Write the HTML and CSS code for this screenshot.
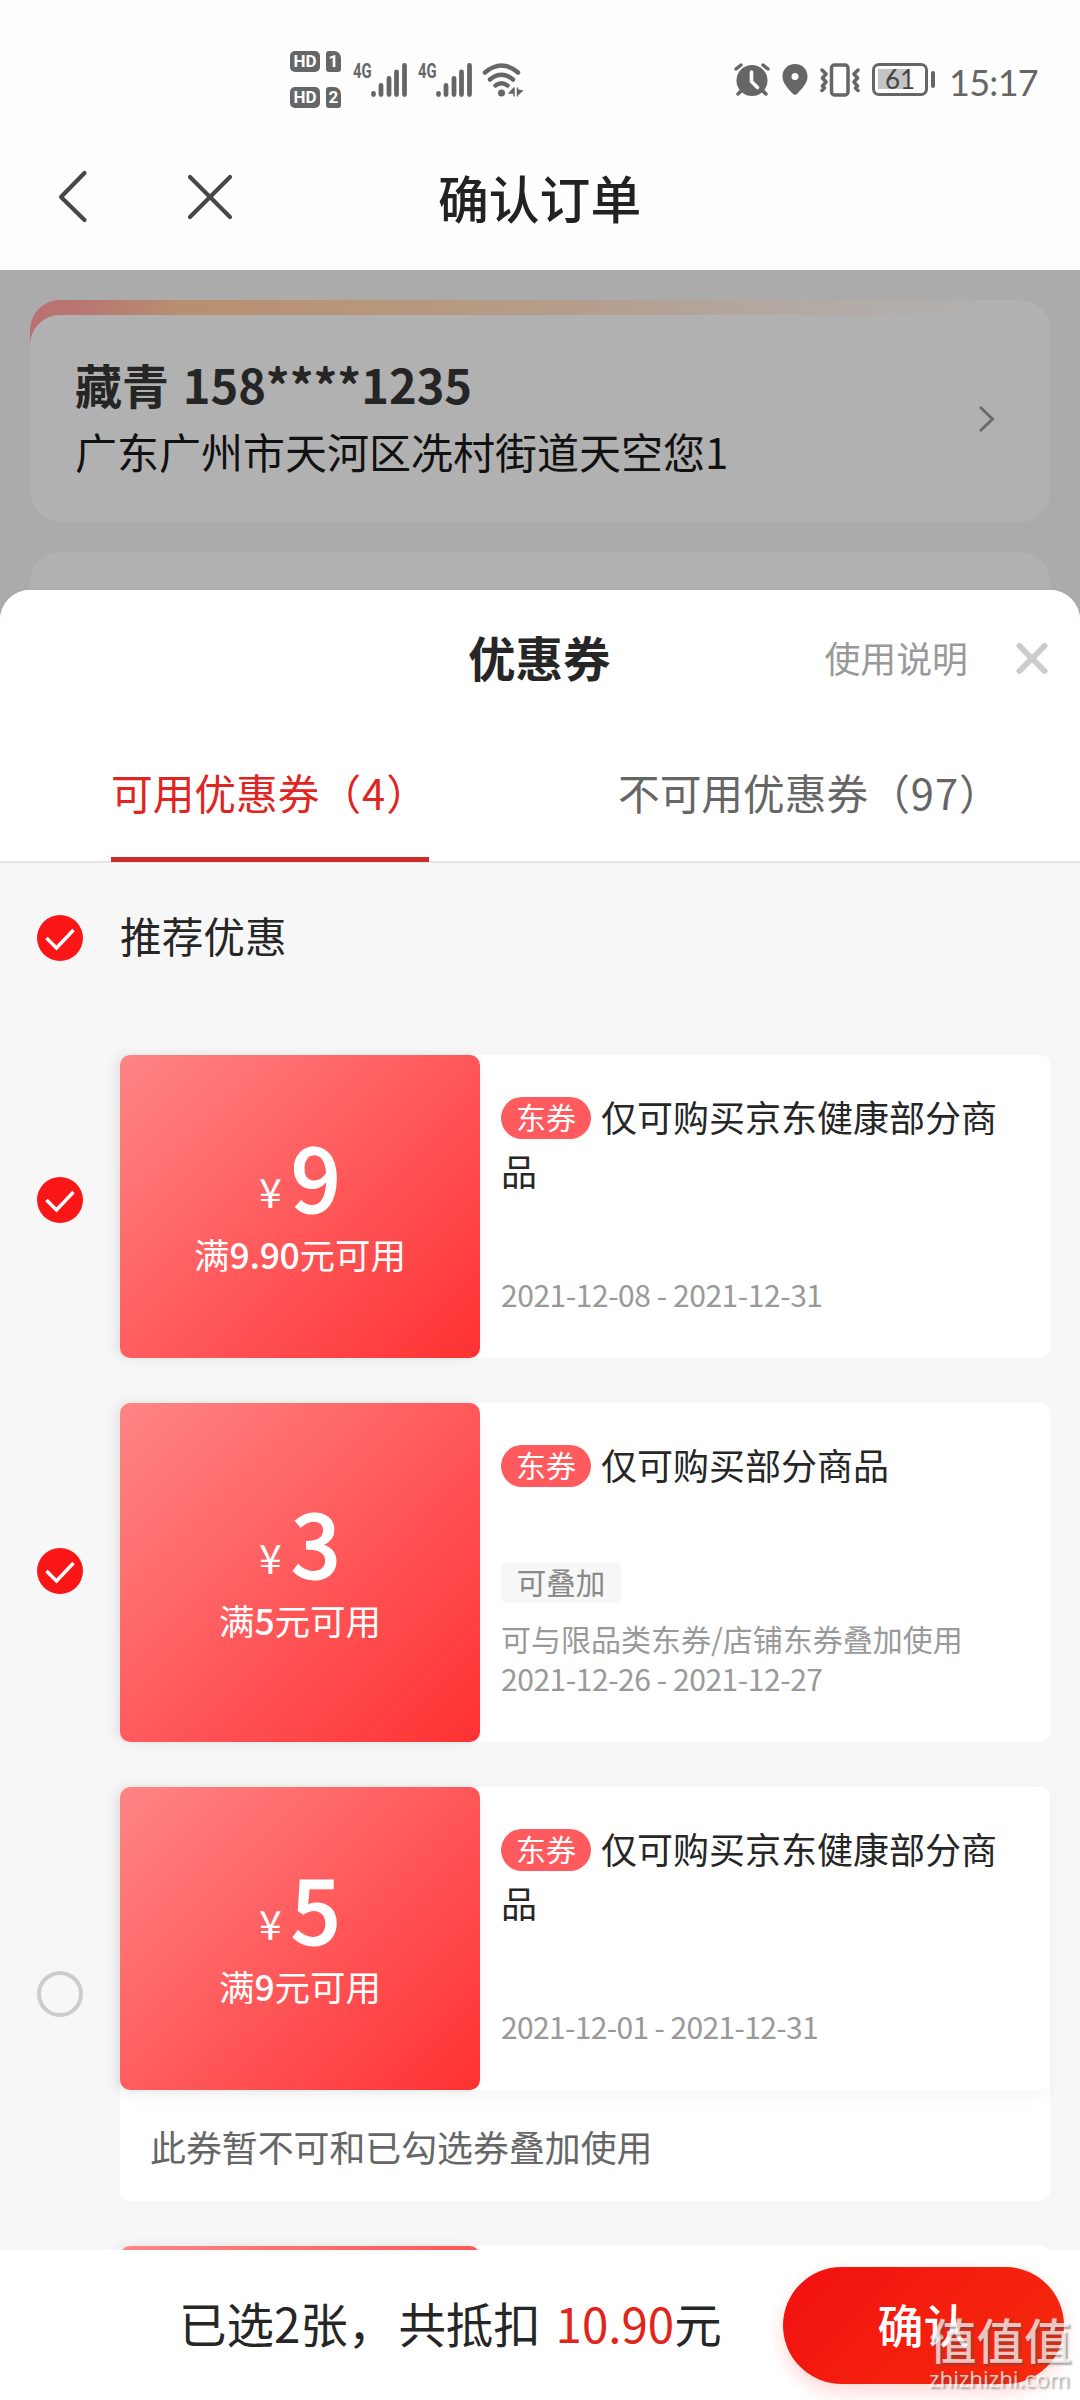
FILE: index.html
```html
<!DOCTYPE html>
<html lang="zh-CN">
<head>
<meta charset="utf-8">
<title>确认订单</title>
<link rel="stylesheet" href="styles.css">
</head>
<body>
<svg class="defs" width="0" height="0">
  <defs>
    <symbol id="signal" viewBox="0 0 36 34">
      <path d="M2.5 30.5v1M10 22.500v9M18 15.500v16M25.500 9v22.500M33.500 2.500v29" stroke="#666" stroke-width="4.800" stroke-linecap="round"/>
    </symbol>
    <symbol id="check" viewBox="0 0 46 46">
      <circle cx="23" cy="23" r="23" fill="#fa1617"/>
      <path d="M9.500 23l10 10 17-18" fill="none" stroke="#fff" stroke-width="3.400"/>
    </symbol>
  </defs>
</svg>
<div class="screen">
  <header class="top">
    <div class="status">
      <div class="hd-stack">
        <div class="hd-row"><span class="hd">HD</span><span class="sim">1</span></div>
        <div class="hd-row"><span class="hd">HD</span><span class="sim">2</span></div>
      </div>
      <span class="net">4G</span><svg class="signal" width="36" height="34"><use href="#signal"/></svg>
      <span class="net net-b">4G</span><svg class="signal" width="36" height="34"><use href="#signal"/></svg>
      <svg class="wifi" width="42" height="34" viewBox="0 0 42 34" fill="none" stroke="#666" stroke-width="4.500" stroke-linecap="round">
        <path d="M3 9.500Q19.500 -4.500 36 9.500M8 16.500Q19.500 7 31 16.500M13.500 22.500Q19.500 18 25.500 22.500"/>
        <circle cx="19.500" cy="30" r="3.500" fill="#666" stroke="none"/>
        <path d="M32 25v8M32 25l-4.500 5H32M35.500 25v8M35.500 27l4.500 1-4.500 4" fill="#666" stroke="#666" stroke-width="1.500"/>
      </svg>
      <span class="grow"></span>
      <svg width="36" height="34" viewBox="0 0 36 34">
        <path d="M8 27l-4 4M28 27l4 4M2 6l5-4M29 2l5 4" stroke="#666" stroke-width="3.500" stroke-linecap="round"/>
        <circle cx="18" cy="17.500" r="15.500" fill="#666"/>
        <path d="M17.500 9v9.500l6 6" fill="none" stroke="#fff" stroke-width="3.600" stroke-linecap="round" stroke-linejoin="round"/>
      </svg>
      <svg class="pin" width="26" height="34" viewBox="0 0 26 34"><path fill="#666" fill-rule="evenodd" d="M13 1C5.500 1 .5 6.500.5 13.500.5 20 6 25.500 10.500 30.500q2.500 2.500 5 0C20 25.500 25.500 20 25.500 13.500 25.500 6.500 20.500 1 13 1zm0 9a3.500 3.500 0 1 1 0 7 3.500 3.500 0 0 1 0-7z"/></svg>
      <svg class="vibe" width="40" height="34" viewBox="0 0 40 34" fill="none" stroke="#666" stroke-width="3.500" stroke-linecap="round" stroke-linejoin="round">
        <rect x="11.500" y="2" width="16.500" height="30" rx="3"/>
        <path d="M2 7l4 4-3.500 4 3.500 4-3.500 4 2 2-2.500 2.500M38 7l-4 4 3.500 4-3.500 4 3.500 4-2 2 2.500 2.500"/>
      </svg>
      <span class="battery"><span class="level"></span><span class="pct">61</span></span><span class="cap"></span>
      <span class="time">15:17</span>
    </div>
    <div class="nav">
      <svg width="200" height="54" viewBox="0 0 200 54" fill="none" stroke="#46474b" stroke-width="4.200" stroke-linecap="round" stroke-linejoin="round"><path d="M26.500 3L3 27l23.500 23M132 7l40 40M172 7l-40 40"/></svg>
      <h1>确认订单</h1>
    </div>
  </header>

  <section class="page">
    <div class="address">
      <div class="address-in">
        <div>
          <div class="who">藏青 <span>158****1235</span></div>
          <div class="where">广东广州市天河区冼村街道天空您1</div>
        </div>
        <svg width="18" height="28" viewBox="0 0 18 28" fill="none" stroke="#6b6b6b" stroke-width="3"><path d="M2 2l12.500 12L2 26"/></svg>
      </div>
    </div>
    <div class="next-card"></div>
  </section>

  <section class="sheet">
    <div class="sheet-head">
      <h2>优惠券</h2>
      <span class="help">使用说明</span>
      <svg width="34" height="34" viewBox="0 0 34 34" stroke="#ccc" stroke-width="6" stroke-linecap="round"><path d="M4.500 5l25 25M29.500 5l-25 25"/></svg>
    </div>
    <nav class="tabs">
      <div class="tab on">可用优惠券<span class="count">（4）</span></div>
      <div class="tab">不可用优惠券<span class="count">（97）</span></div>
    </nav>
    <div class="list">
      <div class="recommend"><svg width="46" height="46"><use href="#check"/></svg><span>推荐优惠</span></div>

      <article class="row first">
        <svg class="pick" width="46" height="46"><use href="#check"/></svg>
        <div class="coupon">
          <div class="main">
            <div class="value"><div class="amount"><i>¥</i><b>9</b></div><div class="rule">满<em>9.90</em>元可用</div></div>
            <div class="info"><p class="name"><span class="tag">东券</span>仅可购买京东健康部分商品</p><p class="date">2021-12-08 - 2021-12-31</p></div>
          </div>
        </div>
      </article>

      <article class="row second">
        <svg class="pick" width="46" height="46"><use href="#check"/></svg>
        <div class="coupon">
          <div class="main tall">
            <div class="value"><div class="amount"><i>¥</i><b>3</b></div><div class="rule">满<em>5</em>元可用</div></div>
            <div class="info"><p class="name"><span class="tag">东券</span>仅可购买部分商品</p>
              <div><span class="stack">可叠加</span><p class="note">可与限品类东券/店铺东券叠加使用</p><p class="date">2021-12-26 - 2021-12-27</p></div></div>
          </div>
        </div>
      </article>

      <article class="row">
        <span class="pick empty"></span>
        <div class="coupon">
          <div class="main lifted">
            <div class="value"><div class="amount"><i>¥</i><b>5</b></div><div class="rule">满<em>9</em>元可用</div></div>
            <div class="info"><p class="name"><span class="tag">东券</span>仅可购买京东健康部分商品</p><p class="date date-ones">2021-12-01 - 2021-12-31</p></div>
          </div>
          <p class="warn">此券暂不可和已勾选券叠加使用</p>
        </div>
      </article>

      <article class="row">
        <span class="pick"></span>
        <div class="coupon"><div class="main"><div class="value"></div></div></div>
      </article>
    </div>
  </section>

  <footer class="bar">
    <p class="sum">已选2张，<span class="off">共抵扣</span> <span class="total">10.90</span>元</p>
    <div class="confirm">确认</div>
  </footer>
  <div class="mark"><span class="mark-zh">值值值</span><span class="mark-en">zhizhizhi.com</span></div>
</div>
</body>
</html>
```
FILE: styles.css
```css
* { box-sizing: border-box; }
body, h1, h2, p { margin: 0; }
body { font-family: "Noto Sans CJK SC", sans-serif; background: #fff; color: #262626; }
i, em { font-style: normal; }
svg { flex: none; display: block; }
.defs { position: absolute; }
.screen { position: relative; width: 1080px; height: 2400px; overflow: hidden; display: flex; flex-direction: column; background: #ababab; }

.top { height: 270px; flex: none; background: #fefefe; }
.status { height: 130px; padding: 29px 44px 0 290px; display: flex; align-items: center; color: #666; }
.hd-stack { display: flex; flex-direction: column; gap: 15px; width: 63px; }
.hd-row { display: flex; gap: 6px; height: 21px; }
.hd, .sim { background: #666; color: #fff; border-radius: 5px; font: 700 17px/21px Roboto, sans-serif; text-align: center; }
.hd { width: 30px; }
.sim { width: 15px; border-radius: 3px 7px 3px 3px; }
.net { width: 18px; height: 34px; font: 700 20px/16px "Roboto", sans-serif; transform: scaleX(.74); transform-origin: 0 0; white-space: nowrap; }
.net-b { margin-left: 11px; }
.wifi { margin-left: 10px; }
.grow { flex: 1; }
.pin { margin-left: 12px; }
.vibe { margin-left: 12px; }
.battery { position: relative; width: 56px; height: 33px; margin-left: 12px; border: 3.500px solid #666; border-radius: 7px; }
.level { position: absolute; left: 3px; top: 3px; width: 29px; height: 20px; background: #c4c4c4; }
.pct { position: absolute; inset: 0; font: 400 26px/27px Lato, sans-serif; text-align: center; color: #444; }
.cap { width: 4px; height: 17px; margin-left: 3px; border-radius: 2px; background: #666; }
.time { margin-left: 14px; width: 87px; padding-top: 4px; font: 400 36px/40px Lato, sans-serif; letter-spacing: -.7px; white-space: nowrap; }
.nav { display: flex; align-items: center; height: 134px; padding-left: 58px; }
h1 { margin: -1px 0 0 180px; font-weight: 500; font-size: 50.800px; line-height: 70px; color: #222; }

.page { flex: none; height: 320px; padding: 30px 30px 0; }
.address { height: 222px; border-radius: 30px; padding-top: 15px; background: linear-gradient(90deg, #b97070 0, #b87671 50px, #b88f70 150px, #b89679 340px, #b59d89 520px, #b3a69e 700px, #b1b1b1 950px); }
.address-in { height: 207px; padding: 0 54px 0 45px; border-radius: 30px; background: #b1b1b1; display: flex; align-items: center; justify-content: space-between; }
.who { font-weight: 700; font-size: 47px; line-height: 68px; margin-top: -4px; color: #252525; }
.who span { margin-left: 3px; }
.where { font-size: 42px; line-height: 65px; color: #111; }
.next-card { height: 60px; margin-top: 30px; border-radius: 30px 30px 0 0; background: #b1b1b1; }

.sheet { flex: none; height: 1660px; display: flex; flex-direction: column; background: #f7f7f7; border-radius: 30px 30px 0 0; overflow: hidden; }
.sheet-head { flex: none; height: 136px; background: #fff; display: flex; align-items: center; padding: 0 31px 0 468px; }
h2 { margin-top: -2px; font-size: 47.500px; line-height: 64px; font-weight: 700; flex: 1; }
.help { margin-top: -3px; font-size: 35.900px; color: #999; }
.sheet-head svg { margin-left: 47px; }
.tabs { flex: none; height: 137px; background: #fff; border-bottom: 2px solid #e5e5e5; display: flex; }
.tab { height: 136px; margin-left: 111px; width: 318px; font-size: 41.700px; line-height: 133px; color: #666; white-space: nowrap; }
.tab + .tab { margin-left: 189px; width: 400px; }
.count { letter-spacing: 1px; }
.on { color: #e02422; border-bottom: 5px solid #cd2a2a; }
.list { flex: 1; min-height: 0; overflow: hidden; padding: 52px 30px 0 37px; display: flex; flex-direction: column; }
.recommend { flex: none; display: flex; align-items: center; height: 46px; margin-bottom: 94px; font-size: 41.700px; line-height: 46px; gap: 37px; }
.recommend span { margin-top: -7px; }
.row { flex: none; display: flex; align-items: center; gap: 37px; margin-bottom: 45px; }
.pick { flex: none; width: 46px; height: 46px; }
.first .pick { margin-top: -14px; }
.second .pick { margin-top: -3px; }
.empty { border: 4px solid #ccc; border-radius: 50%; }
.coupon { width: 930px; background: #fff; border-radius: 10px; }
.main { height: 303px; display: flex; border-radius: 10px; background: #fff; }
.tall { height: 339px; }
.lifted { box-shadow: 0 8px 18px rgba(0,0,0,.035); }
.value { width: 360px; border-radius: 10px; background: linear-gradient(135deg, #ff8585 0, #ff5a5c 50%, #fe3132 100%); color: #fff; display: flex; flex-direction: column; align-items: center; justify-content: center; box-shadow: -4px 0 12px rgba(0,0,0,.09); }
.amount { height: 88px; line-height: 88px; display: flex; align-items: baseline; margin-top: -2px; }
.amount i { font-size: 41px; margin-right: 9px; padding-bottom: 5px; transform: translateY(-5px); }
.amount b { font-size: 88px; font-weight: 500; -webkit-text-stroke: 1px #fff; }
.rule { font-size: 35.500px; line-height: 52px; margin-top: 9px; }
.rule em { font-weight: 500; letter-spacing: -.3px; }
.info { flex: 1; display: flex; flex-direction: column; justify-content: space-between; padding: 34px 38px 44px 21px; }
.name { font-size: 36px; line-height: 54px; color: #262626; }
.tag { display: inline-block; width: 90px; height: 42px; margin-right: 10px; border-radius: 21px; background: #ff5a5e; color: #fff; font-size: 30px; line-height: 39px; text-align: center; vertical-align: 3px; }
.date, .note { font-size: 30px; line-height: 40px; color: #999; white-space: nowrap; }
.date { letter-spacing: -.45px; }
.date-ones { letter-spacing: -.65px; }
.stack { display: block; width: 120px; height: 41px; margin-bottom: 15px; border-radius: 5px; background: #f7f7f7; font-size: 29.500px; line-height: 38px; color: #888; text-align: center; }
.warn { height: 111px; padding-left: 30px; font-size: 35.900px; line-height: 112px; color: #666; }

.bar { flex: none; height: 150px; background: #fff; display: flex; align-items: center; justify-content: space-between; padding: 0 16px 0 179px; }
.sum { margin-top: -5px; font-size: 47.500px; line-height: 66px; white-space: nowrap; }
.off { margin: 0 4px 0 3px; }
.total { color: #e1251b; }
.confirm { width: 281px; height: 117px; border-radius: 59px; background: linear-gradient(135deg, #f21010, #f62c0c); box-shadow: 0 8px 18px rgba(250,40,20,.18); color: #fff; font-weight: 500; font-size: 46px; line-height: 113px; text-align: center; }
.mark { position: absolute; left: 929px; top: 2314px; width: 150px; display: flex; flex-direction: column; color: rgba(255,255,255,.72); text-shadow: 2px 2px 2px rgba(80,80,80,.5); }
.mark-zh { font-size: 47.500px; line-height: 50px; font-weight: 500; white-space: nowrap; }
.mark-en { font: 400 22.200px/30px "Noto Sans", sans-serif; white-space: nowrap; }
```
